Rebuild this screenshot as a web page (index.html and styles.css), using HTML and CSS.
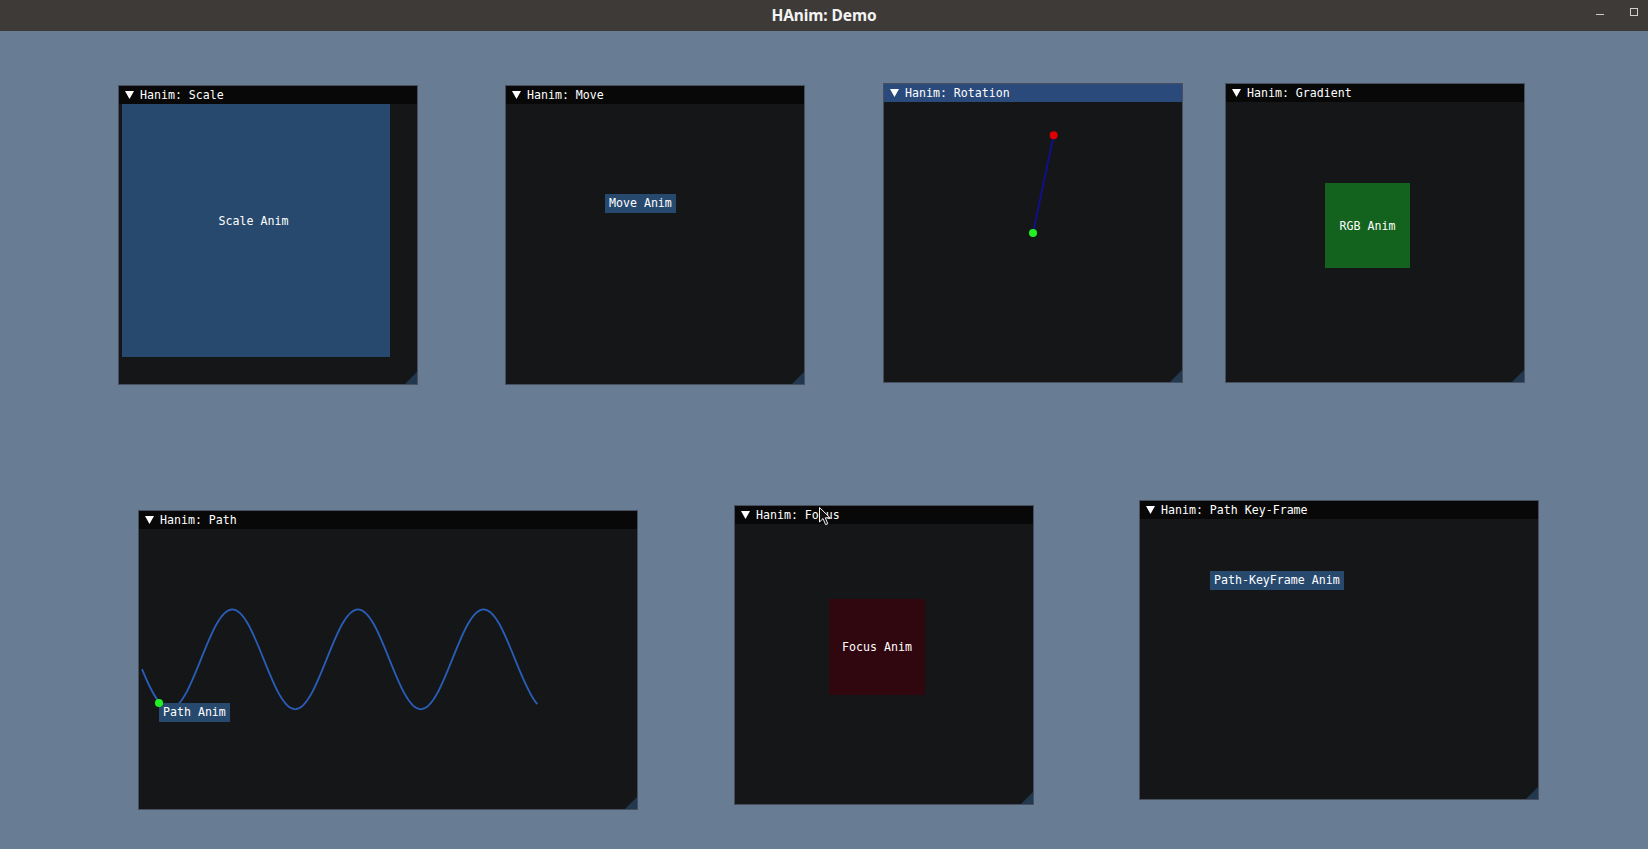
FILE: index.html
```html
<!DOCTYPE html>
<html lang="en">
<head>
<meta charset="utf-8">
<title>HAnim: Demo</title>
<link rel="stylesheet" href="styles.css">
</head>
<body>
<div class="app">
  <header class="titlebar">
    <div class="tb-spacer"></div>
    <div class="tb-title">HAnim: Demo</div>
    <div class="tb-controls">
      <span class="ctl-min"></span>
      <span class="ctl-max"></span>
    </div>
  </header>

  <main class="desktop">
    <section class="win w-scale">
      <div class="win-title"><svg class="arrow" viewBox="0 0 9 8"><polygon points="0,0 9,0 4.5,8"/></svg><span>Hanim: Scale</span></div>
      <div class="win-body">
        <div class="scale-box"><span>Scale Anim</span></div>
      </div>
      <div class="grip"></div>
    </section>

    <section class="win w-move">
      <div class="win-title"><svg class="arrow" viewBox="0 0 9 8"><polygon points="0,0 9,0 4.5,8"/></svg><span>Hanim: Move</span></div>
      <div class="win-body">
        <div class="btn move-btn">Move Anim</div>
      </div>
      <div class="grip"></div>
    </section>

    <section class="win w-rot">
      <div class="win-title active"><svg class="arrow" viewBox="0 0 9 8"><polygon points="0,0 9,0 4.5,8"/></svg><span>Hanim: Rotation</span></div>
      <div class="win-body">
        <svg class="canvas" width="298" height="280" viewBox="0 0 298 280">
          <line x1="149" y1="131" x2="169.7" y2="33.3" stroke="#10108a" stroke-width="2"/>
          <circle cx="169.7" cy="33.3" r="4" fill="#e00000"/>
          <circle cx="149" cy="131" r="4" fill="#22f022"/>
        </svg>
      </div>
      <div class="grip"></div>
    </section>

    <section class="win w-grad">
      <div class="win-title"><svg class="arrow" viewBox="0 0 9 8"><polygon points="0,0 9,0 4.5,8"/></svg><span>Hanim: Gradient</span></div>
      <div class="win-body">
        <div class="rgb-box">RGB Anim</div>
      </div>
      <div class="grip"></div>
    </section>

    <section class="win w-path">
      <div class="win-title"><svg class="arrow" viewBox="0 0 9 8"><polygon points="0,0 9,0 4.5,8"/></svg><span>Hanim: Path</span></div>
      <div class="win-body">
        <svg class="canvas path-canvas" width="500" height="280" viewBox="0 0 500 280">
          <path d="M4 140.06 C13.16 162.53 22.32 180.3 31.49 180.3 C42.86 180.3 52.66 155.92 62.9 130.3 C73.15 104.69 82.95 80.3 94.32 80.3 C105.69 80.3 115.49 104.69 125.73 130.3 C135.98 155.92 145.78 180.3 157.15 180.3 C168.52 180.3 178.32 155.92 188.56 130.3 C198.81 104.69 208.61 80.3 219.98 80.3 C231.35 80.3 241.15 104.69 251.39 130.3 C261.64 155.92 271.44 180.3 282.81 180.3 C294.18 180.3 303.98 155.92 314.22 130.3 C324.47 104.69 334.27 80.3 345.64 80.3 C357.01 80.3 366.81 104.69 377.05 130.3 C384.47 148.84 391.88 166.94 399.3 175.14" fill="none" stroke="#2a5db8" stroke-width="1.8"/>
        </svg>
        <div class="btn path-btn">Path Anim</div>
        <div class="dot path-dot"></div>
      </div>
      <div class="grip"></div>
    </section>

    <section class="win w-focus">
      <div class="win-title"><svg class="arrow" viewBox="0 0 9 8"><polygon points="0,0 9,0 4.5,8"/></svg><span>Hanim: Focus</span></div>
      <div class="win-body">
        <div class="focus-box">Focus Anim</div>
      </div>
      <div class="grip"></div>
    </section>

    <section class="win w-key">
      <div class="win-title"><svg class="arrow" viewBox="0 0 9 8"><polygon points="0,0 9,0 4.5,8"/></svg><span>Hanim: Path Key-Frame</span></div>
      <div class="win-body">
        <div class="btn key-btn">Path-KeyFrame Anim</div>
      </div>
      <div class="grip"></div>
    </section>

    <svg class="cursor" width="12" height="19" viewBox="0 0 12 19">
      <path d="M0.5 0.5 L0.5 15 L4 11.6 L6.6 17.6 L8.8 16.7 L6.3 10.8 L11 10.8 Z" fill="#111" stroke="#f4f4f4" stroke-width="1" stroke-linejoin="round"/>
    </svg>
  </main>
</div>
</body>
</html>
```

FILE: styles.css
```css
* { box-sizing: border-box; }

html, body {
  margin: 0;
  padding: 0;
  width: 1648px;
  height: 849px;
  overflow: hidden;
  background: #687d94;
}

.app {
  display: flex;
  flex-direction: column;
  width: 1648px;
  height: 849px;
}

.titlebar {
  height: 31px;
  flex: 0 0 31px;
  background: #3d3a38;
  display: grid;
  grid-template-columns: 1fr auto 1fr;
  align-items: center;
}

.tb-title {
  font-family: "Noto Sans", "Open Sans", sans-serif;
  font-weight: 700;
  font-size: 15.5px;
  color: #f3f3f3;
  letter-spacing: -0.1px;
  line-height: 31px;
}

.tb-controls {
  display: flex;
  justify-content: flex-end;
  align-items: center;
  gap: 26px;
  padding-right: 10px;
  height: 31px;
}

.ctl-min {
  width: 8px;
  height: 1px;
  background: #cfcfcf;
  margin-top: -3px;
}

.ctl-max {
  width: 8px;
  height: 8px;
  border: 1px solid #cfcfcf;
  margin-top: -7px;
}

.desktop {
  position: relative;
  flex: 1;
}

/* ImGui-like windows placed on the free desktop canvas */
.win {
  position: absolute;
  width: 300px;
  height: 300px;
  border: 1px solid #474e5e;
  background: #151618;
  display: flex;
  flex-direction: column;
  font-family: "DejaVu Sans Mono", "Liberation Mono", monospace;
  font-size: 11.6px;
  color: #ffffff;
}

.w-scale { left: 118px; top: 54px; }
.w-move  { left: 505px; top: 54px; }
.w-rot   { left: 883px; top: 52px; }
.w-grad  { left: 1225px; top: 52px; }
.w-path  { left: 138px; top: 479px; width: 500px; }
.w-focus { left: 734px; top: 474px; }
.w-key   { left: 1139px; top: 469px; width: 400px; }

.win-title {
  height: 18px;
  flex: 0 0 18px;
  background: #080808;
  display: flex;
  align-items: center;
  padding-left: 6px;
  gap: 6px;
  line-height: 18px;
  white-space: pre;
}

.win-title.active { background: #294a7a; }

.arrow {
  width: 9px;
  height: 8px;
  fill: #ffffff;
  flex: 0 0 auto;
}

.win-body {
  position: relative;
  flex: 1;
  overflow: hidden;
}

.grip {
  position: absolute;
  right: 0;
  bottom: 0;
  width: 12px;
  height: 12px;
  background: #22384f;
  clip-path: polygon(100% 0, 100% 100%, 0 100%);
}

.btn {
  position: absolute;
  height: 19px;
  padding: 0 4px;
  background: #27496e;
  line-height: 19px;
  white-space: pre;
}

.move-btn { left: 99px; top: 90px; width: 71px; }
.path-btn { left: 20px; top: 174px; width: 71px; }
.key-btn  { left: 70px; top: 52px; width: 134px; }

.scale-box {
  position: absolute;
  left: 3px;
  top: 0;
  width: 268px;
  height: 253px;
  background: #27496e;
  display: flex;
  align-items: center;
  justify-content: center;
  padding: 0 5px 19px 0;
  white-space: pre;
}

.rgb-box {
  position: absolute;
  left: 99px;
  top: 81px;
  width: 85px;
  height: 85px;
  background: #13621e;
  display: flex;
  align-items: center;
  justify-content: center;
  white-space: pre;
}

.focus-box {
  position: absolute;
  left: 94px;
  top: 75px;
  width: 96px;
  height: 96px;
  background: #30070f;
  display: flex;
  align-items: center;
  justify-content: center;
  white-space: pre;
}

.canvas {
  position: absolute;
  left: 0;
  top: 0;
}

.path-canvas { left: -1px; }

.dot {
  position: absolute;
  width: 8px;
  height: 8px;
  border-radius: 50%;
  background: #22f022;
}

.path-dot { left: 16px; top: 170px; }

.cursor {
  position: absolute;
  left: 819px;
  top: 476px;
}
```
